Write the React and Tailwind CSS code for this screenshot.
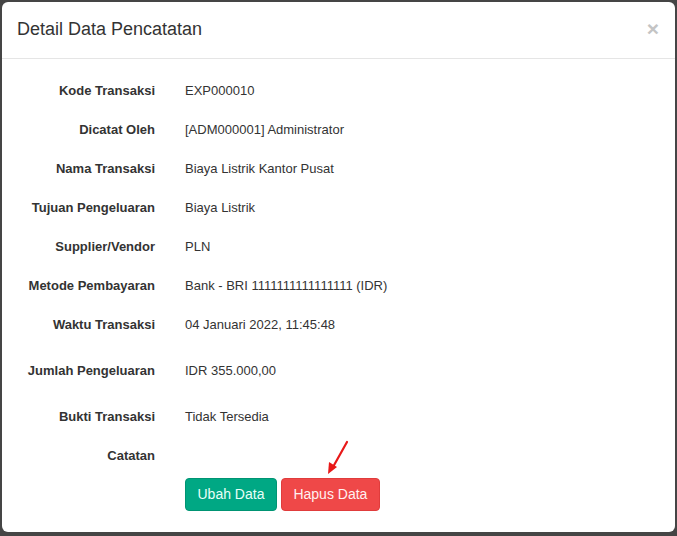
import React from "react";

const ROWS = [
  { label: "Kode Transaksi", value: "EXP000010" },
  { label: "Dicatat Oleh", value: "[ADM000001] Administrator" },
  { label: "Nama Transaksi", value: "Biaya Listrik Kantor Pusat" },
  { label: "Tujuan Pengeluaran", value: "Biaya Listrik" },
  { label: "Supplier/Vendor", value: "PLN" },
  { label: "Metode Pembayaran", value: "Bank - BRI 1111111111111111 (IDR)" },
  { label: "Waktu Transaksi", value: "04 Januari 2022, 11:45:48" },
  { label: "Jumlah Pengeluaran", value: "IDR 355.000,00", tall: true },
  { label: "Bukti Transaksi", value: "Tidak Tersedia" },
  { label: "Catatan", value: "" },
];

function DetailRow({ label, value, tall }) {
  return (
    <div className={`flex items-center ${tall ? "h-[53px]" : "h-[39px]"}`}>
      <div className="w-[153px] shrink-0 text-right font-bold">{label}</div>
      <div className="pl-[30px]">{value}</div>
    </div>
  );
}

export default function App() {
  return (
    <div
      className="w-[677px] h-[536px] bg-[#454545] pt-[2px] px-[2px] overflow-hidden"
      style={{ fontFamily: '"Liberation Sans", Arial, sans-serif' }}
    >
      <div className="relative h-[530px] bg-white rounded-[6px] text-[#333333]">
        <div className="h-[57px] flex items-center justify-between pl-[15px] pr-[16px] pb-[3px] border-b border-[#e5e5e5]">
          <h1 className="text-[18px] leading-none">Detail Data Pencatatan</h1>
          <span className="text-[21px] font-bold leading-none text-[#c4c4c4]">×</span>
        </div>

        <div className="pt-[12px] text-[13px]">
          {ROWS.map((r) => (
            <DetailRow key={r.label} {...r} />
          ))}
          <div className="flex gap-[4px] pl-[183px] pt-[3px]">
            <button className="h-[33px] px-[11.5px] rounded-[4px] bg-[#00a884] border border-[#009473] text-[14px] text-[#e8fff8]">
              Ubah Data
            </button>
            <button className="h-[33px] px-[11.5px] rounded-[4px] bg-[#ef4848] border border-[#e03c3c] text-[14px] text-[#fff0f0]">
              Hapus Data
            </button>
          </div>
        </div>

        <svg
          className="absolute left-[320px] top-[436px]"
          width="30"
          height="40"
          viewBox="0 0 30 40"
        >
          <line x1="25" y1="4" x2="11" y2="29" stroke="#e81919" strokeWidth="2.2" strokeLinecap="round" />
          <polygon points="6,36 7,24 15,29" fill="#e81919" />
        </svg>
      </div>
    </div>
  );
}
